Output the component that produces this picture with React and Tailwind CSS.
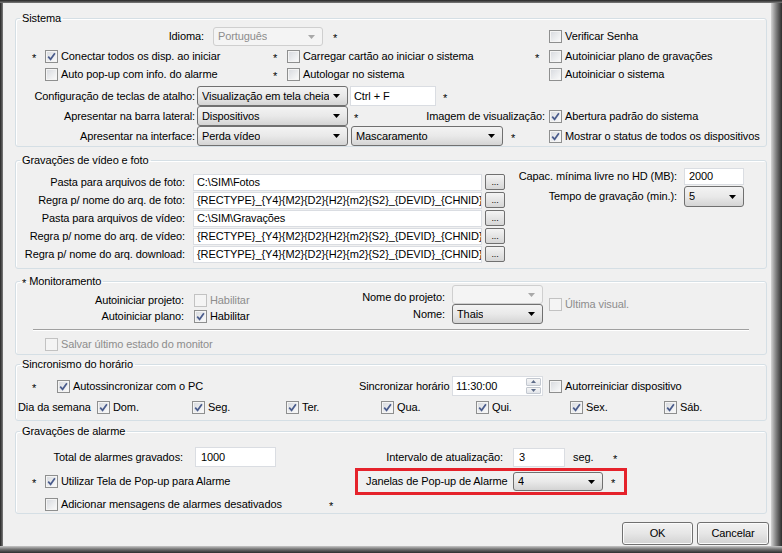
import React from "react";

function Box({ checked, disabled }) {
	return (
		<span
			className={`flex h-[13px] w-[13px] shrink-0 items-center justify-center border ${
				disabled
					? "border-[#c2c2c2] bg-[#f4f4f4]"
					: "border-[#8e8f8f] bg-linear-to-br from-[#d6d9de] to-[#fcfcfc] shadow-[inset_0_0_0_1px_#f4f4f4]"
			}`}>
			{checked && (
				<svg width="9" height="9" viewBox="0 0 9 9">
					<path d="M1.2 4.6 L3.6 7.3 L7.9 1.3" fill="none" stroke="#4a5c8c" strokeWidth="1.7" />
				</svg>
			)}
		</span>
	);
}

function Chk({ checked, disabled, children, className = "" }) {
	return (
		<div className={`flex shrink-0 items-center gap-[3px] whitespace-nowrap ${className}`}>
			<Box checked={checked} disabled={disabled} />
			<span className={disabled ? "text-[#8d8d8d]" : ""}>{children}</span>
		</div>
	);
}

function Star({ className = "" }) {
	return <span className={`inline-block translate-y-[2px] ${className}`}>*</span>;
}

function Combo({ value, disabled, className = "" }) {
	return (
		<div
			className={`flex shrink-0 items-center justify-between rounded-[3px] border pl-[4px] pr-[7px] ${
				disabled
					? "border-[#cfcfcf] bg-[#f4f4f4] text-[#8d8d8d]"
					: "border-[#707070] bg-linear-to-b from-[#f3f3f3] via-[#e9e9e9] to-[#d4d4d4]"
			} ${className}`}>
			<span className="truncate whitespace-nowrap">{value}</span>
			<svg width="7" height="4" viewBox="0 0 7 4" className="shrink-0">
				<path d="M0 0H7L3.5 4Z" fill={disabled ? "#a8a8a8" : "#000"} />
			</svg>
		</div>
	);
}

function Field({ value, className = "" }) {
	return (
		<div
			className={`flex shrink-0 items-center overflow-hidden whitespace-nowrap border border-[#dadde2] bg-white pl-[3px] ${className}`}>
			{value}
		</div>
	);
}

function Dots() {
	return (
		<div className="ml-[3px] flex h-[16px] w-[20px] shrink-0 items-end justify-center rounded-[2px] border border-[#707070] bg-linear-to-b from-[#f4f4f4] to-[#d6d6d6] pb-[2px] text-[9px] leading-none">
			...
		</div>
	);
}

function Btn({ children, className = "" }) {
	return (
		<div
			className={`flex h-[23px] items-center justify-center rounded-[3px] border border-[#707070] bg-linear-to-b from-[#f2f2f2] via-[#e6e6e6] to-[#d2d2d2] shadow-[inset_0_0_0_1px_#fbfbfb] ${className}`}>
			{children}
		</div>
	);
}

function Group({ title, className = "", children }) {
	return (
		<fieldset
			className={`ml-[12px] w-[752px] shrink-0 rounded-[3px] border border-[#d5dfe5] shadow-[inset_1px_1px_0_#ffffff] ${className}`}>
			<legend className="ml-[4px] px-[2px] leading-[13px]">{title}</legend>
			{children}
		</fieldset>
	);
}

const rule = "{RECTYPE}_{Y4}{M2}{D2}{H2}{m2}{S2}_{DEVID}_{CHNID}";

export default function App() {
	const dias = [
		["Dom.", "w-[95px]"],
		["Seg.", "w-[94px]"],
		["Ter.", "w-[95px]"],
		["Qua.", "w-[95px]"],
		["Qui.", "w-[94px]"],
		["Sex.", "w-[94px]"],
		["Sáb.", "w-[60px]"],
	];

	const pastas = [
		["Pasta para arquivos de foto:", "C:\\SIM\\Fotos"],
		["Regra p/ nome do arq. de foto:", rule],
		["Pasta para arquivos de vídeo:", "C:\\SIM\\Gravações"],
		["Regra p/ nome do arq. de vídeo:", rule],
		["Regra p/ nome do arq. download:", rule],
	];

	return (
		<div className="flex h-[553px] w-[782px] flex-col overflow-hidden bg-[#f0f0f0] font-['Liberation_Sans',Arial,sans-serif] text-[11px] leading-[13px] tracking-[-0.1px] text-black">
			<div className="h-[3px] shrink-0 bg-linear-to-b from-[#262626] to-[#7d7d7d]" />
			<div className="flex min-h-0 flex-1">
				<div className="w-[3px] shrink-0 bg-linear-to-r from-[#262626] to-[#7d7d7d]" />
				<div className="flex flex-1 flex-col">
					{/* Sistema */}
					<Group title="Sistema" className="mt-[9px] h-[135px]">
						<div className="mt-[2px] flex h-[19px] items-center">
							<div className="w-[188px] text-right">Idioma:</div>
							<Combo value="Português" disabled className="ml-[9px] h-[19px] w-[110px]" />
							<div className="ml-[10px] w-[216px]">
								<Star />
							</div>
							<Chk>Verificar Senha</Chk>
						</div>
						<div className="flex h-[19px] items-center pt-px">
							<div className="ml-[16px] w-[13px]">
								<Star />
							</div>
							<Chk checked className="w-[228px]">
								Conectar todos os disp. ao iniciar
							</Chk>
							<div className="w-[14px]">
								<Star />
							</div>
							<Chk className="w-[248px]">Carregar cartão ao iniciar o sistema</Chk>
							<div className="w-[14px]">
								<Star />
							</div>
							<Chk>Autoiniciar plano de gravações</Chk>
						</div>
						<div className="flex h-[18px] items-center">
							<Chk className="ml-[29px] w-[228px]">Auto pop-up com info. do alarme</Chk>
							<div className="w-[14px]">
								<Star />
							</div>
							<Chk className="w-[248px]">Autologar no sistema</Chk>
							<div className="w-[14px]" />
							<Chk>Autoiniciar o sistema</Chk>
						</div>
						<div className="mt-[3px] flex h-[20px] items-center">
							<div className="w-[179px] whitespace-nowrap text-right">Configuração de teclas de atalho:</div>
							<Combo value="Visualização em tela cheia" className="ml-[2px] h-[20px] w-[151px]" />
							<Field value="Ctrl + F" className="ml-[2px] h-[20px] w-[86px]" />
							<Star className="ml-[7px]" />
						</div>
						<div className="flex h-[20px] items-center">
							<div className="w-[179px] whitespace-nowrap text-right">Apresentar na barra lateral:</div>
							<Combo value="Dispositivos" className="ml-[2px] h-[20px] w-[151px]" />
							<div className="ml-[6px] flex w-[191px] items-center justify-between whitespace-nowrap">
								<Star />
								<span>Imagem de visualização:</span>
							</div>
							<Chk checked className="ml-[4px]">
								Abertura padrão do sistema
							</Chk>
						</div>
						<div className="flex h-[20px] items-center">
							<div className="w-[179px] whitespace-nowrap text-right">Apresentar na interface:</div>
							<Combo value="Perda vídeo" className="ml-[2px] h-[20px] w-[151px]" />
							<Combo value="Mascaramento" className="ml-[3px] h-[20px] w-[152px]" />
							<div className="ml-[8px] w-[38px]">
								<Star />
							</div>
							<div className="w-[211px] overflow-hidden">
								<Chk checked>Mostrar o status de todos os dispositivos</Chk>
							</div>
						</div>
					</Group>

					{/* Gravações de vídeo e foto */}
					<Group title="Gravações de vídeo e foto" className="mt-[7px] h-[115px]">
						<div className="flex items-start">
							<div className="mt-[6px] flex flex-col">
								{pastas.map(([label, value], i) => (
									<div key={i} className="flex h-[18px] items-center">
										<div className="w-[169px] whitespace-nowrap text-right">{label}</div>
										<Field value={value} className="ml-[8px] h-[17px] w-[289px]" />
										<Dots />
									</div>
								))}
							</div>
							<div className="mt-[1px] flex flex-col">
								<div className="flex h-[17px] items-center">
									<div className="w-[172px] whitespace-nowrap text-right">Capac. mínima livre no HD (MB):</div>
									<Field value="2000" className="ml-[7px] h-[17px] w-[60px] pl-[4px]" />
								</div>
								<div className="mt-[1px] flex h-[21px] items-center">
									<div className="w-[172px] whitespace-nowrap text-right">Tempo de gravação (min.):</div>
									<Combo value="5" className="ml-[7px] h-[21px] w-[60px]" />
								</div>
							</div>
						</div>
					</Group>

					{/* Monitoramento */}
					<Group
						title={
							<span>
								<Star />
								<span className="ml-[3px]">Monitoramento</span>
							</span>
						}
						className="mt-[6px] h-[80px]">
						<div className="-mt-[3px] flex items-center">
							<div className="flex w-[300px] flex-col self-start pt-[7px]">
								<div className="flex h-[16px] items-center">
									<div className="w-[168px] whitespace-nowrap text-right">Autoiniciar projeto:</div>
									<Chk disabled className="ml-[10px]">
										Habilitar
									</Chk>
								</div>
								<div className="flex h-[16px] items-center">
									<div className="w-[168px] whitespace-nowrap text-right">Autoiniciar plano:</div>
									<Chk checked className="ml-[10px]">
										Habilitar
									</Chk>
								</div>
							</div>
							<div className="flex flex-col">
								<div className="flex h-[19px] items-end">
									<div className="w-[129px] whitespace-nowrap text-right">Nome do projeto:</div>
									<Combo value="" disabled className="ml-[7px] h-[19px] w-[91px]" />
								</div>
								<div className="flex h-[20px] items-center">
									<div className="w-[129px] whitespace-nowrap text-right">Nome:</div>
									<Combo value="Thais" className="ml-[7px] h-[20px] w-[91px]" />
								</div>
							</div>
							<Chk disabled className="ml-[6px]">
								Última visual.
							</Chk>
						</div>
						<div className="ml-[17px] mt-[5px] h-[2px] w-[716px] border-t border-b border-t-[#a0a0a0] border-b-white" />
						<div className="mt-[4px] flex h-[18px] items-center">
							<Chk disabled className="ml-[29px]">
								Salvar último estado do monitor
							</Chk>
						</div>
					</Group>

					{/* Sincronismo do horário */}
					<Group title="Sincronismo do horário" className="mt-[3px] h-[63px]">
						<div className="mt-[5px] flex h-[20px] items-center">
							<div className="ml-[16px] w-[25px]">
								<Star />
							</div>
							<Chk checked className="w-[302px]">
								Autossincronizar com o PC
							</Chk>
							<div className="w-[93px] whitespace-nowrap">Sincronizar horário</div>
							<div className="flex h-[20px] w-[91px] shrink-0 items-center border border-[#dadde2] bg-white pl-[3px]">
								<span className="flex-1">11:30:00</span>
								<div className="mr-[1px] flex h-[16px] w-[15px] flex-col gap-px">
									<div className="flex flex-1 items-center justify-center rounded-[1px] border border-[#c3c8d0] bg-linear-to-b from-[#f6f6f6] to-[#e2e5ea]">
										<svg width="5" height="3" viewBox="0 0 5 3">
											<path d="M0 3H5L2.5 0Z" fill="#5d6b88" />
										</svg>
									</div>
									<div className="flex flex-1 items-center justify-center rounded-[1px] border border-[#c3c8d0] bg-linear-to-b from-[#f6f6f6] to-[#e2e5ea]">
										<svg width="5" height="3" viewBox="0 0 5 3">
											<path d="M0 0H5L2.5 3Z" fill="#5d6b88" />
										</svg>
									</div>
								</div>
							</div>
							<Chk className="ml-[6px]">Autorreiniciar dispositivo</Chk>
						</div>
						<div className="mt-[2px] flex h-[18px] items-center">
							<div className="ml-[2px] w-[79px] whitespace-nowrap">Dia da semana</div>
							{dias.map(([d, w]) => (
								<Chk key={d} checked className={w}>
									{d}
								</Chk>
							))}
						</div>
					</Group>

					{/* Gravações de alarme */}
					<Group title="Gravações de alarme" className="mt-[4px] h-[89px]">
						<div className="mt-[9px] flex h-[20px] items-center">
							<div className="w-[167px] whitespace-nowrap text-right">Total de alarmes gravados:</div>
							<Field value="1000" className="ml-[12px] h-[20px] w-[81px] pl-[5px]" />
							<div className="w-[227px] whitespace-nowrap text-right">Intervalo de atualização:</div>
							<Field value="3" className="ml-[10px] h-[19px] w-[52px] pl-[5px]" />
							<div className="ml-[8px] w-[40px]">seg.</div>
							<Star />
						</div>
						<div className="mt-[1px] flex h-[27px] items-center">
							<div className="ml-[16px] w-[13px]">
								<Star />
							</div>
							<Chk checked className="w-[310px]">
								Utilizar Tela de Pop-up para Alarme
							</Chk>
							<div className="flex h-[27px] w-[272px] shrink-0 items-center border-[3px] border-[#e5222b]">
								<div className="w-[155px] whitespace-nowrap pl-[8px]">Janelas de Pop-up de Alarme</div>
								<Combo value="4" className="h-[19px] w-[90px]" />
								<Star className="ml-[8px]" />
							</div>
						</div>
						<div className="flex h-[18px] items-center">
							<Chk className="ml-[29px] w-[284px]">Adicionar mensagens de alarmes desativados</Chk>
							<Star />
						</div>
					</Group>

					<div className="mr-[2px] mt-[8px] flex justify-end">
						<Btn className="w-[71px]">OK</Btn>
						<Btn className="ml-[4px] w-[72px]">Cancelar</Btn>
					</div>
				</div>
				<div className="w-[11px] shrink-0 bg-linear-to-r from-[#d4d4d4] via-[#7a7a7a] to-[#2e2e2e]" />
			</div>
			<div className="h-[7px] shrink-0 bg-linear-to-b from-[#c8c8c8] via-[#6e6e6e] to-[#2e2e2e]" />
		</div>
	);
}
